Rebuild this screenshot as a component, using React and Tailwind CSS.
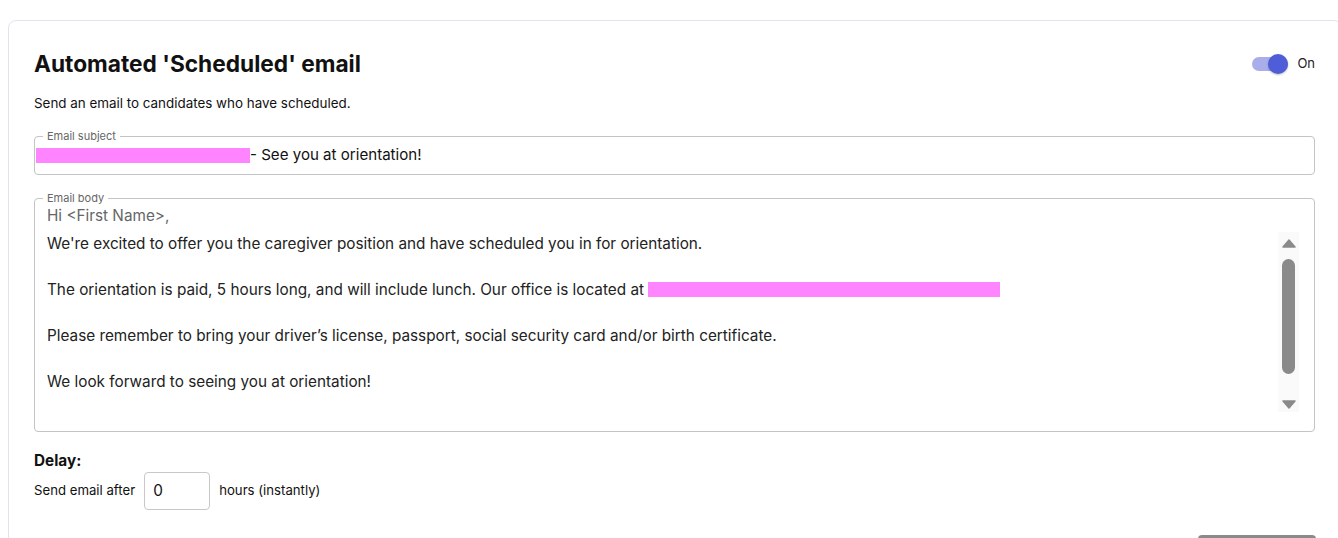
import React from 'react';

const Pink = ({ w, h }) => (
  <span className={`inline-block align-middle bg-[#ff84ff] ${w} ${h}`} />
);

const Toggle = () => (
  <div className="flex items-center gap-[9px]">
    <div className="relative w-[36px] h-[20px] flex items-center">
      <div className="w-[36px] h-[14px] rounded-full bg-[#a9aeea]" />
      <div className="absolute right-0 top-0 w-[20px] h-[20px] rounded-full bg-[#4f5dd8] shadow-[0_1px_2px_rgba(0,0,0,0.25)]" />
    </div>
    <span className="text-[13px] text-[#222]">On</span>
  </div>
);

const Scrollbar = () => (
  <div className="w-[21px] h-[180px] bg-[#fafafa] flex flex-col items-center pt-[7px] pb-[3px]">
    <svg width="14" height="9" viewBox="0 0 14 9">
      <path d="M1 8 L7 1 L13 8 Z" fill="#8a8a8a" stroke="#8a8a8a" strokeLinejoin="round" strokeWidth="1.5" />
    </svg>
    <div className="w-[13px] h-[115px] mt-[11px] rounded-full bg-[#8a8a8a]" />
    <div className="flex-1" />
    <svg width="14" height="9" viewBox="0 0 14 9">
      <path d="M1 1 L13 1 L7 8 Z" fill="#8a8a8a" stroke="#8a8a8a" strokeLinejoin="round" strokeWidth="1.5" />
    </svg>
  </div>
);

export default function App() {
  return (
    <div
      className="w-full h-[538px] overflow-hidden bg-white pl-[8px] pt-[20px]"
      style={{ fontFamily: 'Inter, "Noto Sans", sans-serif' }}
    >
      <div className="w-[1334px] border border-[#e3e3ef] rounded-[8px] pt-[29px] pl-[25px] pr-[26px] pb-[40px]">
        {/* Header */}
        <div className="flex items-center justify-between">
          <h1 className="text-[22.7px] leading-[28px] font-bold text-[#111]">Automated 'Scheduled' email</h1>
          <Toggle />
        </div>
        <p className="mt-[17px] text-[13.4px] leading-[16px] text-[#111]">
          Send an email to candidates who have scheduled.
        </p>

        {/* Subject */}
        <fieldset className="mt-[19px] border border-[#c4c4c4] rounded-[4px] pl-[1px] pb-[8px]">
          <legend className="ml-[7px] px-[4px] text-[11px] leading-[13px] text-[#666]">Email subject</legend>
          <div className="flex items-center text-[15.1px] leading-[22px] text-[#111] mt-[1px]">
            <Pink w="w-[214px]" h="h-[15px]" />
            <span>- See you at orientation!</span>
          </div>
        </fieldset>

        {/* Body */}
        <fieldset className="mt-[17px] border border-[#c4c4c4] rounded-[4px] pl-[12px] pr-[15px] pb-[19px]">
          <legend className="ml-[-4px] px-[4px] text-[11px] leading-[13px] text-[#666]">Email body</legend>
          <div className="mt-[1px] text-[15.3px] leading-[20px] text-[#666]">Hi &lt;First Name&gt;,</div>
          <div className="mt-[6px] flex">
            <div className="flex-1 text-[15.3px] leading-[23px] text-[#222]">
              <p>We're excited to offer you the caregiver position and have scheduled you in for orientation.</p>
              <p className="mt-[23px] flex items-center">
                <span>The orientation is paid, 5 hours long, and will include lunch. Our office is located at&nbsp;</span>
                <Pink w="w-[352px]" h="h-[15px]" />
              </p>
              <p className="mt-[23px]">Please remember to bring your driver’s license, passport, social security card and/or birth certificate.</p>
              <p className="mt-[23px]">We look forward to seeing you at orientation!</p>
            </div>
            <Scrollbar />
          </div>
        </fieldset>

        {/* Delay */}
        <div className="mt-[19px] text-[15.3px] leading-[20px] font-bold text-[#111]">Delay:</div>
        <div className="mt-[1px] flex items-center gap-[9px] text-[13.2px] text-[#111]">
          <span>Send email after</span>
          <div className="w-[66px] h-[38px] border border-[#c8c8c8] rounded-[4px] flex items-center pl-[8px] text-[15.3px]">0</div>
          <span>hours (instantly)</span>
        </div>

        <div className="flex justify-end mt-[25px] -mr-[1px]">
          <div className="w-[118px] h-[36px] rounded-[4px] bg-[#8a8a8a]" />
        </div>
      </div>
    </div>
  );
}
